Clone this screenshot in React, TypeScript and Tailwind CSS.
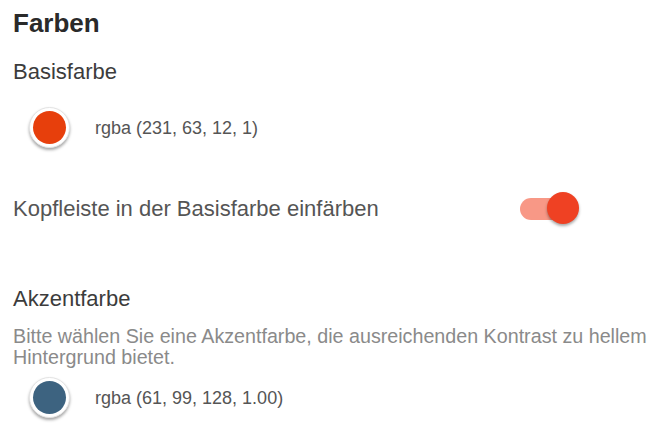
import React from "react";

function Swatch({ color }: { color: string }) {
  return (
    <div className="w-[41px] h-[41px] rounded-full bg-white border-[1px] border-[#e4e4e4] shadow-[0_2px_3px_rgba(0,0,0,0.35)] flex items-center justify-center shrink-0">
      <div className="w-[33px] h-[33px] rounded-full" style={{ backgroundColor: color }} />
    </div>
  );
}

export default function App() {
  return (
    <div
      className="bg-white w-[661px] h-[436px] overflow-hidden pl-[13px] pt-[8px] flex flex-col"
      style={{ fontFamily: '"Liberation Sans", Arial, sans-serif' }}
    >
      <h1 className="text-[26px] leading-[30px] font-bold text-[#2a2a2a]">Farben</h1>
      <h2 className="mt-[21px] text-[22px] leading-[26px] text-[#3c3c3c]">Basisfarbe</h2>
      <div className="mt-[22px] flex items-center">
        <div className="ml-[16px]">
          <Swatch color="rgb(231,63,12)" />
        </div>
        <span className="ml-[25px] text-[18px] leading-[22px] text-[#555]">
          rgba (231, 63, 12, 1)
        </span>
      </div>
      <div className="mt-[45px] w-[567px] flex items-center justify-between">
        <span className="text-[22px] leading-[26px] text-[#555]">
          Kopfleiste in der Basisfarbe einfärben
        </span>
        <div className="relative w-[60px] h-[32px]">
          <div className="absolute left-0 top-[5px] w-[50px] h-[22px] rounded-full bg-[#f89886]" />
          <div className="absolute left-[27px] top-[-1px] w-[32px] h-[32px] rounded-full bg-[#ef4123] shadow-[0_2px_3px_rgba(0,0,0,0.35)]" />
        </div>
      </div>
      <h2 className="mt-[61px] text-[22px] leading-[26px] text-[#3c3c3c]">Akzentfarbe</h2>
      <p className="mt-[14px] text-[19.7px] leading-[21px] text-[#8a8a8a]">
        Bitte wählen Sie eine Akzentfarbe, die ausreichenden Kontrast zu hellem Hintergrund bietet.
      </p>
      <div className="mt-[9px] flex items-center">
        <div className="ml-[16px]">
          <Swatch color="rgb(61,99,128)" />
        </div>
        <span className="ml-[25px] text-[18px] leading-[22px] text-[#555]">
          rgba (61, 99, 128, 1.00)
        </span>
      </div>
    </div>
  );
}
